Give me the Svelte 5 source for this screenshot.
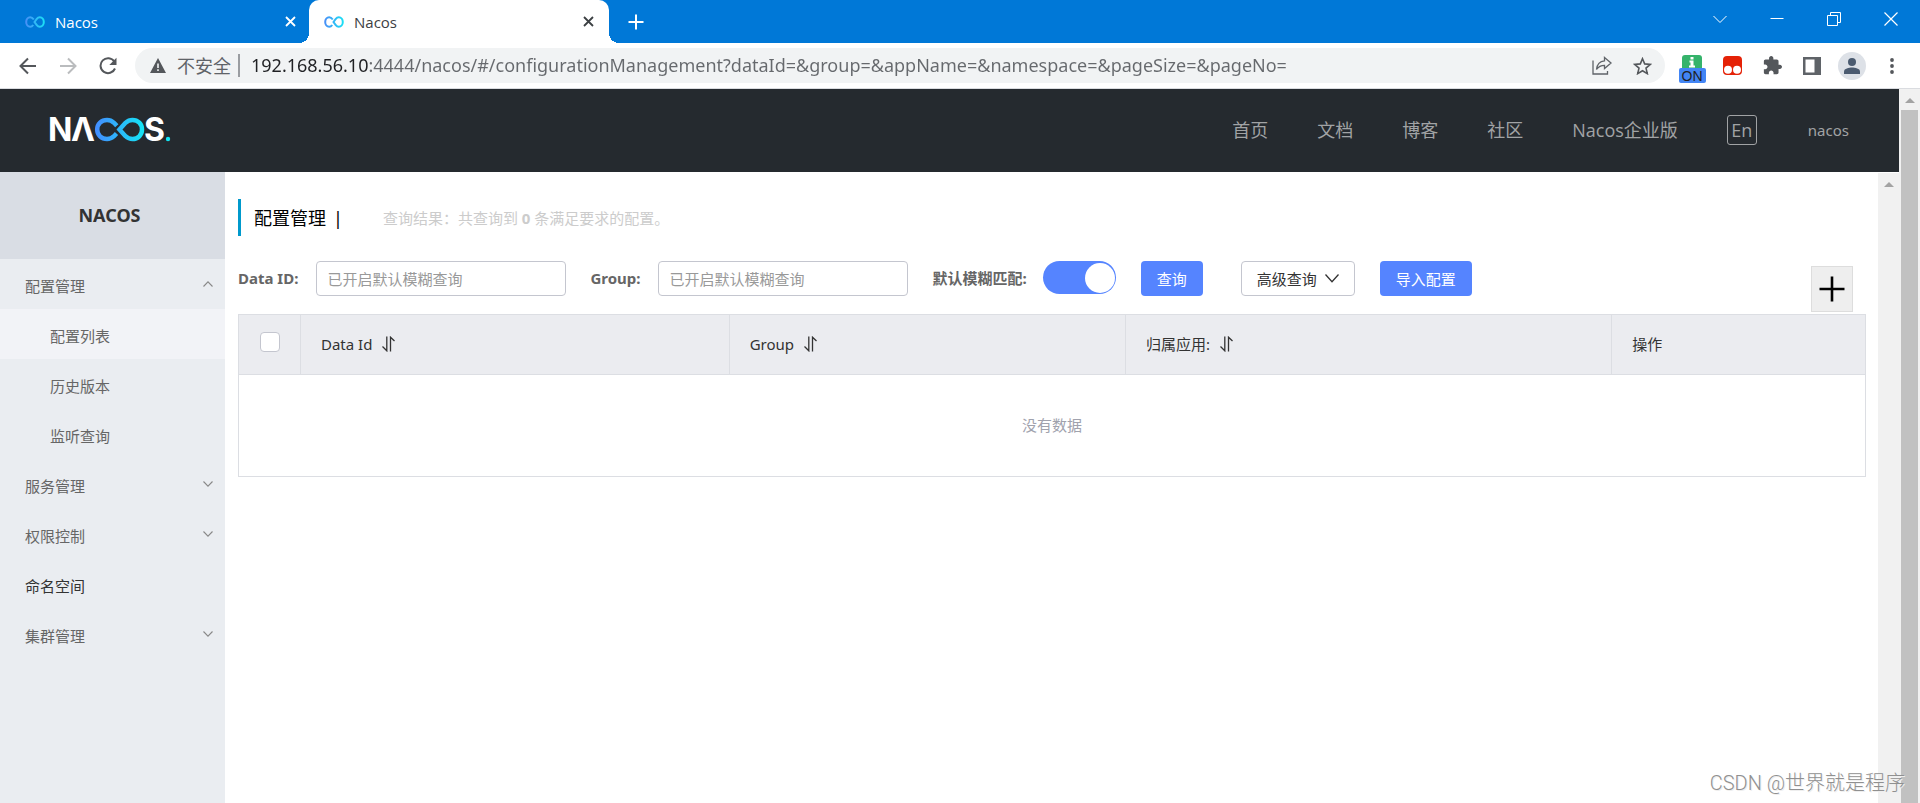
<script>
  const tabs = [
    { id: 1, title: 'Nacos', active: false },
    { id: 2, title: 'Nacos', active: true },
  ];
  const nav = ['首页', '文档', '博客', '社区', 'Nacos企业版'];
  const menu = [
    { label: '配置管理', open: true, children: ['配置列表', '历史版本', '监听查询'] },
    { label: '服务管理', open: false, children: [] },
    { label: '权限控制', open: false, children: [] },
    { label: '命名空间', leaf: true, children: [] },
    { label: '集群管理', open: false, children: [] },
  ];
  let current = $state('配置列表');
  let fuzzy = $state(true);
  let url = $state(
    '192.168.56.10:4444/nacos/#/configurationManagement?dataId=&group=&appName=&namespace=&pageSize=&pageNo='
  );
</script>

{#snippet favicon(id)}
  <svg class="favicon" width="20" height="12" viewBox="0 0 20 12" aria-hidden="true">
    <defs>
      <linearGradient id={'fav' + id} gradientUnits="userSpaceOnUse" x1="0" y1="0" x2="20" y2="0">
        <stop offset="0" stop-color="#4a8cf7" />
        <stop offset="1" stop-color="#19e3f5" />
      </linearGradient>
    </defs>
    <g fill="none" stroke={`url(#fav${id})`} stroke-width="2">
      <path d="M8.2 9C7.4 10.2 6.400 10.800 5.200 10.800C2.900 10.800 1.200 8.700 1.200 6S2.900 1.200 5.200 1.200C6.700 1.200 7.800 2.100 8.800 3.500" />
      <path d="M9.500 6L11.800 2.900C12.600 1.800 13.600 1.200 14.800 1.200C17.100 1.200 18.800 3.300 18.800 6S17.100 10.800 14.800 10.800C13.600 10.800 12.600 10.200 11.800 9.100Z" />
    </g>
  </svg>
{/snippet}

{#snippet sort()}
  <svg class="sort" width="13" height="16" viewBox="0 0 13 16" aria-hidden="true">
    <path d="M4.800 0.500V14.800L0.500 10.500M8.500 15.500V1.200L12.500 5" fill="none" stroke="#333" stroke-width="1.300" />
  </svg>
{/snippet}

<div class="window">
  <header class="tabbar">
    {#each tabs as tab}
      <div class="tab" class:active={tab.active}>
        {@render favicon(tab.id)}
        <span>{tab.title}</span>
        <button class="tabclose" aria-label="关闭标签页">
          <svg width="11" height="11" viewBox="0 0 11 11"><path d="M1 1L10 10M10 1L1 10" stroke="currentColor" stroke-width="1.800" /></svg>
        </button>
      </div>
    {/each}
    <button class="newtab" aria-label="新标签页">
      <svg width="16" height="16" viewBox="0 0 16 16"><path d="M8 0.500V15.500M0.500 8H15.500" stroke="#fff" stroke-width="2" /></svg>
    </button>
    <div class="winctl">
      <button aria-label="搜索标签页"><svg width="14" height="14" viewBox="0 0 14 14"><path d="M0.500 4L7 10.500L13.500 4" fill="none" stroke="#fff" /></svg></button>
      <button aria-label="最小化"><svg width="14" height="14" viewBox="0 0 14 14"><path d="M0.500 6.500H13.500" stroke="#fff" /></svg></button>
      <button aria-label="还原"><svg width="14" height="14" viewBox="0 0 14 14"><path d="M0.500 3.500H10.500V13.500H0.500ZM3.500 3.500V0.500H13.500V10.500H10.500" fill="none" stroke="#fff" /></svg></button>
      <button aria-label="关闭"><svg width="14" height="14" viewBox="0 0 14 14"><path d="M0.500 0.500L13.500 13.500M13.500 0.500L0.500 13.500" stroke="#fff" stroke-width="1.200" /></svg></button>
    </div>
  </header>

  <div class="toolbar">
    <button class="tool" aria-label="后退"><svg width="18" height="18" viewBox="0 0 18 18"><path d="M17 9H2M9 1.500L1.500 9L9 16.500" fill="none" stroke="#54575b" stroke-width="2" /></svg></button>
    <button class="tool" aria-label="前进"><svg width="18" height="18" viewBox="0 0 18 18"><path d="M1 9H16M9 1.500L16.500 9L9 16.500" fill="none" stroke="#babcbe" stroke-width="2" /></svg></button>
    <button class="tool" aria-label="重新加载"><svg width="18" height="18" viewBox="0 0 18 18"><path d="M15.300 4.500A7.500 7.500 0 1 0 16 11.500" fill="none" stroke="#54575b" stroke-width="2" /><path d="M17.500 0.800V8H10.300Z" fill="#54575b" /></svg></button>
    <div class="omnibox">
      <svg width="16" height="15" viewBox="0 0 16 15" aria-hidden="true"><path d="M8 0L16 15H0Z" fill="#54575b" /><path d="M7.200 5.500H8.800V10H7.200ZM7.200 11.300H8.800V13H7.200Z" fill="#f1f3f4" /></svg>
      <label for="address">不安全</label>
      <i></i>
      <input id="address" type="text" bind:value={url} spellcheck="false" />
      <button class="tool" aria-label="分享"><svg width="20" height="19" viewBox="0 0 20 19"><path d="M1 4.500V18H15.500V15M12.500 1.500L19 7L12.500 12.500V9.300C9 9.300 6.500 10.500 4.500 13.500C5 8.500 8 5.200 12.500 4.800Z" fill="none" stroke="#5f6368" stroke-width="1.300" /></svg></button>
      <button class="tool" aria-label="收藏"><svg width="19" height="18" viewBox="0 0 19 18"><path d="M9.500 1.700L11.700 6.900L17.300 7.400L13 11.100L14.300 16.600L9.500 13.700L4.700 16.600L6 11.100L1.700 7.400L7.300 6.900Z" fill="none" stroke="#54575b" stroke-width="1.600" /></svg></button>
    </div>
    <button class="tool ext" aria-label="扩展程序 ON">
      <svg width="20" height="13" viewBox="0 0 20 13"><rect width="20" height="16" rx="3" fill="#35b36b" /><path d="M8.500 2h3v2.500h-3zM7.500 5.500h4v5h1.500v2h-6v-2h1.500v-3h-1z" fill="#fff" /></svg>
      <b>ON</b>
    </button>
    <button class="tool" aria-label="Tampermonkey"><svg width="19" height="19" viewBox="0 0 19 19"><rect width="19" height="19" rx="4" fill="#e52207" /><circle cx="5" cy="13.700" r="4" fill="#fff" /><circle cx="14" cy="13.700" r="4" fill="#fff" /></svg></button>
    <button class="tool" aria-label="扩展程序"><svg width="19" height="19" viewBox="1 1 22 22"><path d="M20.500 11H19V7c0-1.100-.9-2-2-2h-4V3.500C13 2.120 11.880 1 10.500 1S8 2.120 8 3.500V5H4c-1.100 0-1.990.9-1.990 2v3.800H3.500c1.490 0 2.700 1.210 2.700 2.700s-1.210 2.700-2.700 2.700H2V20c0 1.100.9 2 2 2h3.800v-1.500c0-1.490 1.210-2.700 2.700-2.700s2.700 1.210 2.700 2.700V22H17c1.100 0 2-.9 2-2v-4h1.500c1.380 0 2.500-1.120 2.500-2.500S21.880 11 20.500 11z" fill="#54575b" /></svg></button>
    <button class="tool" aria-label="侧边栏"><svg width="18" height="18" viewBox="0 0 18 18"><path d="M0 0H18V18H0ZM2.500 2.500V15.500H11.500V2.500Z" fill="#5f6368" fill-rule="evenodd" /></svg></button>
    <button class="tool" aria-label="个人资料"><svg width="28" height="28" viewBox="0 0 28 28"><circle cx="14" cy="14" r="14" fill="#dde1e7" /><circle cx="14" cy="10" r="4" fill="#4b5b70" /><path d="M6 22V19.500C6 16.500 11 15.500 14 15.500S22 16.500 22 19.500V22Z" fill="#4b5b70" /></svg></button>
    <button class="tool" aria-label="更多"><svg width="4" height="16" viewBox="0 0 4 16"><circle cx="2" cy="2" r="1.900" fill="#54575b" /><circle cx="2" cy="8" r="1.900" fill="#54575b" /><circle cx="2" cy="14" r="1.900" fill="#54575b" /></svg></button>
  </div>

  <div class="viewport">
    <div class="page">
      <header class="top">
        <a href="#/" aria-label="NACOS.">
          <svg class="logo" width="130" height="50" viewBox="-4 -12 130 50" aria-hidden="true">
            <defs>
              <linearGradient id="brand" gradientUnits="userSpaceOnUse" x1="45" y1="0" x2="95" y2="0">
                <stop offset="0" stop-color="#448cff" />
                <stop offset="1" stop-color="#13e6f5" />
              </linearGradient>
            </defs>
            <text x="-2" y="24">N</text>
            <text x="21" y="24">Λ</text>
            <g fill="none" stroke="url(#brand)" stroke-width="4.500">
              <path d="M66.500 16.500L64 19.200C62 21 60 22 57 22C51.500 22 47.200 18 47.200 12.500S51.500 3 57 3C60 3 62 4 64 5.800L66.800 8.800" />
              <path d="M69.500 12.500L75.500 5.800C77.500 4 79.500 3 82.500 3C88 3 92 7 92 12.500S88 22 82.500 22C79.500 22 77.500 21 75.500 19.200Z" />
            </g>
            <text x="94" y="24">S</text>
            <circle cx="118" cy="22" r="2.200" fill="#13e6f5" />
          </svg>
        </a>
        <nav>
          {#each nav as item}<a href="#/">{item}</a>{/each}
          <button class="lang">En</button>
          <a class="user" href="#/">nacos</a>
        </nav>
      </header>

      <div class="body">
        <aside>
          <h1>NACOS</h1>
          <ul>
            {#each menu as item}
              <li>
                <a href="#/" class:leaf={item.leaf}>
                  {item.label}
                  {#if !item.leaf}
                    <svg class:up={item.open} width="10" height="6" viewBox="0 0 10 6" aria-hidden="true"><path d="M0.500 0.500L5 5.200L9.500 0.500" fill="none" stroke="#888" stroke-width="1.100" /></svg>
                  {/if}
                </a>
                {#if item.open}
                  <ul>
                    {#each item.children as child}
                      <li><a class="sub" class:selected={child === current} href="#/" onclick={() => (current = child)}>{child}</a></li>
                    {/each}
                  </ul>
                {/if}
              </li>
            {/each}
          </ul>
        </aside>

        <main>
          <div class="title">
            <h2>配置管理</h2><span class="bar">|</span>
            <p>查询结果：共查询到 <strong>0</strong> 条满足要求的配置。</p>
          </div>
          <form onsubmit={(e) => e.preventDefault()}>
            <label for="dataid">Data ID:</label>
            <input id="dataid" type="text" placeholder="已开启默认模糊查询" />
            <label for="group">Group:</label>
            <input id="group" type="text" placeholder="已开启默认模糊查询" />
            <label class="toggle" for="fuzzy">默认模糊匹配:</label>
            <input id="fuzzy" class="switch" type="checkbox" role="switch" bind:checked={fuzzy} />
            <button class="primary">查询</button>
            <button class="plain" type="button">
              高级查询
              <svg width="14" height="9" viewBox="0 0 14 9" aria-hidden="true"><path d="M0.500 0.500L7 7.800L13.500 0.500" fill="none" stroke="#333" stroke-width="1.300" /></svg>
            </button>
            <button class="primary" type="button">导入配置</button>
            <button class="add" type="button" aria-label="新建配置">
              <svg width="26" height="26" viewBox="0 0 26 26"><path d="M13 0.500V25.500M0.500 13H25.500" stroke="#000" stroke-width="2.600" /></svg>
            </button>
          </form>
          <table>
            <colgroup>
              <col class="c0" /><col class="c1" /><col class="c2" /><col class="c3" /><col />
            </colgroup>
            <thead>
              <tr>
                <th class="check"><input type="checkbox" aria-label="全选" /></th>
                <th>Data Id{@render sort()}</th>
                <th>Group{@render sort()}</th>
                <th>归属应用:{@render sort()}</th>
                <th>操作</th>
              </tr>
            </thead>
            <tbody>
              <tr><td colspan="5">没有数据</td></tr>
            </tbody>
          </table>
        </main>
        <div class="scroll inner"><svg width="10" height="5" viewBox="0 0 10 5"><path d="M5 0L10 5H0Z" fill="#a3a3a3" /></svg></div>
      </div>
    </div>
    <div class="scroll outer"><svg width="10" height="5" viewBox="0 0 10 5"><path d="M5 0L10 5H0Z" fill="#a3a3a3" /></svg><i></i></div>
  </div>
  <div class="mark">CSDN @世界就是程序</div>
</div>

<style>
  :global(body) { margin: 0; }
  .window, .window * { box-sizing: border-box; }
  .window {
    position: relative;
    display: flex;
    flex-direction: column;
    height: 100vh;
    overflow: hidden;
    background: #fff;
    font-family: "Noto Sans", "Noto Sans CJK SC", sans-serif;
    font-size: 15px;
    line-height: 20px;
    color: #333;
  }
  button { border: 0; padding: 0; background: none; font: inherit; color: inherit; display: flex; align-items: center; justify-content: center; }
  a { color: inherit; text-decoration: none; }
  ul { list-style: none; margin: 0; padding: 0; }
  h1, h2, p { margin: 0; }
  svg { display: block; flex: none; }

  .tabbar { display: flex; height: 43px; background: #0078d7; flex: none; color: #fff; }
  .tab { position: relative; display: flex; align-items: center; width: 309px; padding: 0 13px 0 25px; font-family: "Open Sans", sans-serif; }
  .tab span { flex: 1; padding-left: 10px; }
  .tab.active { width: 300px; padding: 0 15px 0 15px; background: #fff; color: #3c4043; border-radius: 10px 10px 0 0; }
  .tab.active::before, .tab.active::after { content: ""; position: absolute; bottom: 0; width: 10px; height: 10px; }
  .tab.active::before { left: -10px; background: radial-gradient(circle at 0 0, transparent 10px, #fff 10px); }
  .tab.active::after { right: -10px; background: radial-gradient(circle at 100% 0, transparent 10px, #fff 10px); }
  .tabclose { width: 11px; height: 43px; }
  .newtab { width: 54px; height: 43px; }
  .winctl { display: flex; margin-left: auto; height: 37px; padding-right: 1px; }
  .winctl button { width: 57px; }

  .toolbar { display: flex; align-items: center; flex: none; height: 46px; padding: 0 8px; border-bottom: 1px solid #dadce0; }
  .tool { width: 40px; height: 36px; flex: none; }
  .omnibox { flex: 1; display: flex; align-items: center; height: 35px; margin: 0 7px; padding: 0 3px 0 15px; border-radius: 18px; background: #f1f3f4; font-size: 18px; color: #5f6368; }
  .omnibox label { margin: 0 7px 0 11px; line-height: 24px; }
  .omnibox i { width: 2px; height: 23px; background: #9a9da1; }
  .omnibox input {
    flex: 1; min-width: 0; height: 30px; margin-left: 11px; padding: 0 0 2px; border: 0; outline: 0; font: inherit;
    color: transparent;
    background: linear-gradient(90deg, #202124 119px, #66696d 119px);
    background-clip: text;
    -webkit-background-clip: text;
  }
  .ext { flex-direction: column; align-self: flex-end; height: 28px; margin-bottom: 5px; }
  .ext b { width: 27px; height: 15px; border-radius: 2px; background: #4285f4; color: #202124; font: 400 14px/16px "Liberation Sans", sans-serif; }

  .viewport { flex: 1; display: flex; min-height: 0; }
  .page { flex: 1; display: flex; flex-direction: column; min-width: 0; }
  .top { display: flex; justify-content: space-between; align-items: center; flex: none; height: 83px; padding: 0 50px 2px 46px; background: #252a2f; color: #a1a3a5; }
  .logo { fill: #fff; font: 700 32px Inter, sans-serif; }
  nav { display: flex; align-items: center; gap: 49px; font-size: 18px; line-height: 30px; font-family: "Open Sans", "Noto Sans CJK SC", sans-serif; }
  .lang { width: 30px; height: 30px; border: 1px solid #a1a3a5; border-radius: 3px; }
  .user { padding-left: 2px; font-size: 15px; font-family: "Noto Sans", sans-serif; }

  .body { flex: 1; display: flex; min-height: 0; }
  aside { width: 225px; flex: none; background: #eaedf1; color: #666; }
  h1 { height: 87px; padding-right: 6px; background: #d9dde4; color: #333; font-size: 18px; line-height: 87px; text-align: center; }
  aside a { display: flex; align-items: center; justify-content: space-between; height: 50px; padding: 4px 12px 0 25px; }
  aside a svg { margin-bottom: 4px; }
  aside a.leaf { color: #333; }
  aside a.sub { padding-left: 50px; }
  .selected { background: #f2f3f7; }
  .up { transform: rotate(180deg); }

  main { flex: 1; min-width: 0; padding: 27px 12px 0 13px; }
  .title { display: flex; align-items: center; height: 37px; padding-left: 13px; border-left: 3px solid #0099cc; }
  h2, .bar { font-size: 18px; font-weight: 400; line-height: 36px; color: #000; }
  .bar { margin-left: 7px; }
  .title p { margin-left: 40px; color: #ccc; }
  form { display: flex; align-items: flex-start; margin-top: 25px; padding-bottom: 2px; }
  form label { font-weight: 700; line-height: 35px; color: #666; margin: 0 18px 0 24px; white-space: nowrap; }
  form label:first-child { margin-left: 0; }
  form label.toggle { margin-right: 16px; }
  form input[type="text"] { width: 250px; height: 35px; padding: 0 10px; border: 1px solid #c4c6cf; border-radius: 4px; font: inherit; outline: 0; min-width: 80px; }
  form input::placeholder { color: #999; opacity: 1; }
  .switch { appearance: none; width: 73px; height: 33px; margin: 0; border-radius: 17px; background: #c4c6cf; flex: none; display: flex; padding: 2px; }
  .switch::before { content: ""; width: 30px; height: 30px; border-radius: 50%; background: #fff; }
  .switch:checked { background: #5584ff; justify-content: flex-end; padding-right: 1px; }
  .primary, .plain { height: 35px; padding: 0 16px; border-radius: 4px; margin-left: 25px; flex: none; }
  .primary { background: #5584ff; color: #fff; }
  .plain { margin-left: 38px; padding: 0 15px; border: 1px solid #c4c6cf; gap: 8px; }
  .add { width: 42px; height: 46px; margin: 5px 13px 0 auto; border: 1px solid #ddd; background: #eee; flex: none; }

  table { width: 100%; border-collapse: collapse; table-layout: fixed; border: 1px solid #dcdee3; }
  .c0 { width: 62px; } .c1 { width: 26.35%; } .c2 { width: 24.35%; } .c3 { width: 29.9%; }
  th { height: 60px; padding: 0 20px 2px; border: 1px solid #dcdee3; background: #ebecf0; text-align: left; font-weight: 400; }
  th.check { padding: 0; }
  th input { appearance: none; display: block; width: 20px; height: 20px; margin: 0 auto 6px; border: 1px solid #c4c6cf; border-radius: 4px; background: #fff; }
  .sort { display: inline-block; vertical-align: -2px; margin-left: 10px; }
  td { height: 102px; padding: 0 0 2px; text-align: center; color: #a0a2ad; }

  .scroll { width: 21px; flex: none; background: #f1f1f1; display: flex; flex-direction: column; align-items: center; padding-top: 9px; }
  .inner { margin-top: 1px; }
  .outer i { flex: 1; width: 17px; margin-top: 7px; background: #c1c1c1; }
  .mark { position: absolute; right: 15px; bottom: 8px; font-size: 20px; line-height: 24px; font-family: Roboto, "Noto Sans CJK SC", sans-serif; font-weight: 300; color: #909090; text-shadow: 1px 1px 0 #eee; }
</style>
